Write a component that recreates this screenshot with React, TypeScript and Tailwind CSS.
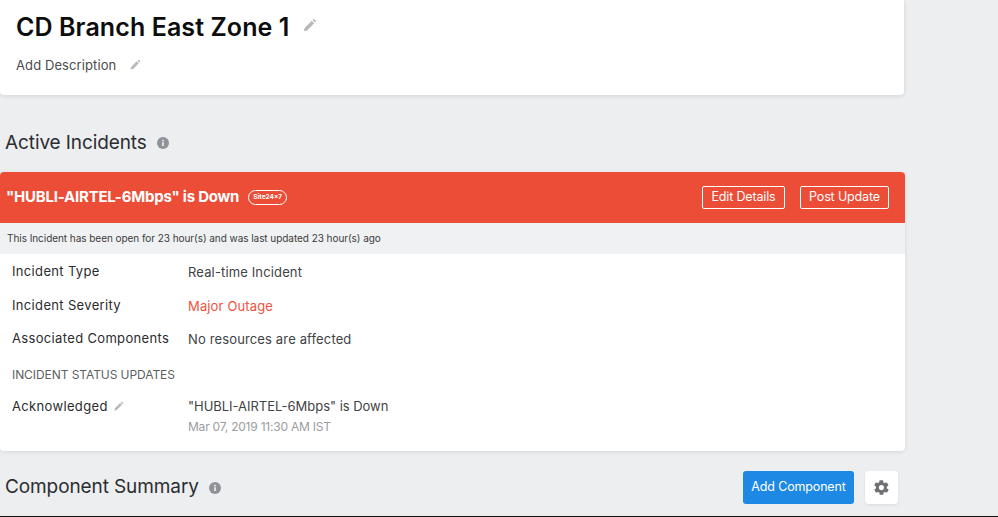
import React from "react";

const Pencil = ({ size, className }: { size: number; className?: string }) => (
  <svg width={size} height={size} viewBox="0 0 24 24" className={className} fill="currentColor">
    <path d="M3 21l1.2-5.2L15.6 4.4l4 4L8.2 19.8 3 21zM16.9 3.1l1.2-1.2a1.2 1.2 0 0 1 1.7 0l2.3 2.3a1.2 1.2 0 0 1 0 1.7l-1.2 1.2-4-4z" />
  </svg>
);

const Info = () => (
  <svg width="12" height="12" viewBox="0 0 12 12" className="shrink-0">
    <circle cx="6" cy="6" r="6" fill="#8f9296" />
    <rect x="5.1" y="5.2" width="1.8" height="3.8" fill="#e6e7ea" />
    <rect x="5.1" y="2.8" width="1.8" height="1.6" fill="#e6e7ea" />
  </svg>
);

const Gear = () => (
  <svg width="17" height="17" viewBox="0 0 24 24" fill="#6f7175">
    <path d="M19.4 13a7.6 7.6 0 0 0 0-2l2.2-1.7a.5.5 0 0 0 .1-.7l-2.1-3.6a.5.5 0 0 0-.6-.2l-2.6 1a7.6 7.6 0 0 0-1.7-1l-.4-2.8a.5.5 0 0 0-.5-.4h-4.2a.5.5 0 0 0-.5.4l-.4 2.8a7.6 7.6 0 0 0-1.7 1l-2.6-1a.5.5 0 0 0-.6.2L2.0 8.6a.5.5 0 0 0 .1.7L4.3 11a7.6 7.6 0 0 0 0 2l-2.2 1.7a.5.5 0 0 0-.1.7l2.1 3.6c.1.2.4.3.6.2l2.6-1c.5.4 1.1.7 1.7 1l.4 2.8c0 .2.2.4.5.4h4.2c.3 0 .5-.2.5-.4l.4-2.8c.6-.3 1.2-.6 1.7-1l2.6 1c.2.1.5 0 .6-.2l2.1-3.6a.5.5 0 0 0-.1-.7L19.4 13zM11.9 15.6a3.6 3.6 0 1 1 0-7.2 3.6 3.6 0 0 1 0 7.2z" />
  </svg>
);

const Row = ({ label, value, valueClass, className }: { label: string; value: string; valueClass: string; className: string }) => (
  <div className={`flex items-center h-[20px] ${className}`}>
    <div className="w-[176px] text-[13px] tracking-[0.34px] text-[#2a2c2e]">{label}</div>
    <div className={`text-[13px] tracking-[0.14px] pt-[1px] ${valueClass}`}>{value}</div>
  </div>
);

export default function App() {
  return (
    <div
      className="w-[998px] h-[517px] overflow-hidden bg-[#edeef0] border-b border-[#111] flex flex-col"
      style={{ fontFamily: "Inter, 'Liberation Sans', sans-serif" }}
    >
      <div className="w-[904px] h-[95px] shrink-0 bg-white rounded-bl-[4px] rounded-br-[4px] shadow-[0_1px_4px_rgba(0,0,0,0.12)] pl-[16px] pt-[11px]">
        <div className="flex items-center h-[32px]">
          <h1 className="text-[25px] leading-[32px] font-semibold tracking-[0.09px] text-[#0c0d0e]">CD Branch East Zone 1</h1>
          <Pencil size={15} className="ml-[13px] -mt-[3px] text-[#b9b9b9]" />
        </div>
        <div className="flex items-center mt-[13px] h-[20px]">
          <span className="text-[13px] tracking-[0.1px] text-[#4a4c4e]">Add Description</span>
          <Pencil size={12} className="ml-[13px] -mt-[3px] text-[#b9b9b9]" />
        </div>
      </div>

      <div className="flex items-center h-[26px] mt-[35px] pl-[5px] shrink-0">
        <h2 className="text-[19px] tracking-[-0.1px] text-[#2a2d30]">Active Incidents</h2>
        <span className="ml-[10px]"><Info /></span>
      </div>

      <div className="w-[905px] h-[279px] mt-[16px] shrink-0 bg-white rounded-[4px] overflow-hidden shadow-[0_1px_4px_rgba(0,0,0,0.1)] flex flex-col">
        <div className="h-[51px] shrink-0 bg-[#ec4d36] flex items-center pl-[6px] pr-[16px]">
          <span className="text-[15px] font-bold tracking-[-0.22px] text-white">"HUBLI-AIRTEL-6Mbps" is Down</span>
          <span className="ml-[9px] w-[39px] h-[15px] rounded-full border border-white flex items-center justify-center text-[6.5px] font-bold text-white">Site24x7</span>
          <button className="ml-auto w-[83px] h-[23px] rounded-[2px] border border-white text-[12.5px] tracking-[-0.15px] text-white">Edit Details</button>
          <button className="ml-[15px] w-[89px] h-[23px] rounded-[2px] border border-white text-[12.5px] tracking-[-0.15px] text-white">Post Update</button>
        </div>
        <div className="h-[31px] shrink-0 bg-[#f0f1f2] flex items-center pl-[7px] text-[10px] tracking-[-0.05px] text-[#3a3c3e]">
          This Incident has been open for 23 hour(s) and was last updated 23 hour(s) ago
        </div>
        <div className="pl-[12px] flex flex-col">
          <Row label="Incident Type" value="Real-time Incident" valueClass="text-[#414345]" className="mt-[8px]" />
          <Row label="Incident Severity" value="Major Outage" valueClass="text-[#ee5340]" className="mt-[14px]" />
          <Row label="Associated Components" value="No resources are affected" valueClass="text-[#414345]" className="mt-[13px]" />
          <div className="mt-[18px] h-[16px] flex items-center text-[12px] tracking-[-0.07px] text-[#5c5f62]">INCIDENT STATUS UPDATES</div>
          <div className="flex mt-[13px]">
            <div className="w-[176px] flex items-center h-[20px]">
              <span className="text-[13px] tracking-[0.34px] text-[#2a2c2e] pt-[1px]">Acknowledged</span>
              <Pencil size={11} className="ml-[5px] mt-[1px] text-[#b9b9b9]" />
            </div>
            <div className="flex flex-col">
              <span className="h-[20px] leading-[20px] text-[13px] tracking-[-0.03px] text-[#414345]">"HUBLI-AIRTEL-6Mbps" is Down</span>
              <span className="h-[20px] mt-[1px] leading-[20px] text-[12px] tracking-[-0.22px] text-[#9a9c9f]">Mar 07, 2019 11:30 AM IST</span>
            </div>
          </div>
        </div>
      </div>

      <div className="w-[893px] ml-[5px] mt-[20px] flex items-center shrink-0 h-[33px]">
        <h2 className="text-[19px] tracking-[-0.1px] text-[#2a2d30]">Component Summary</h2>
        <span className="ml-[10px] mt-[1px]"><Info /></span>
        <button className="ml-auto w-[111px] h-[33px] rounded-[3px] bg-[#1e88e5] text-[12.5px] tracking-[-0.15px] text-white">Add Component</button>
        <button className="ml-[11px] w-[33px] h-[33px] rounded-[4px] bg-white flex items-center justify-center shadow-[0_1px_3px_rgba(0,0,0,0.08)]"><Gear /></button>
      </div>
    </div>
  );
}
